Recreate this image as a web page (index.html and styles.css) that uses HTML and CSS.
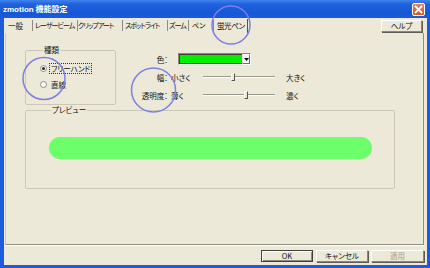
FILE: index.html
```html
<!DOCTYPE html>
<html lang="ja">
<head>
<meta charset="utf-8">
<title>zmotion 機能設定</title>
<link rel="stylesheet" href="styles.css">
</head>
<body>
<div class="window">
  <div class="titlebar">
    <span class="title"><span class="latin">zmotion</span> 機能設定</span>
    <span class="close"><svg width="11" height="11" viewBox="0 0 11 11"><path d="M2.5 2.5 L8.5 8.5 M8.5 2.5 L2.5 8.5" stroke="#fff" stroke-width="1.8" stroke-linecap="square"/></svg></span>
  </div>
  <div class="client">
    <div class="tabbar">
      <span class="tab t1">一般</span>
      <span class="tab t2">レーザービーム</span>
      <span class="tab t3">クリップアート</span>
      <span class="tab t4">スポットライト</span>
      <span class="tab t5">ズーム</span>
      <span class="tab t6">ペン</span>
      <span class="tab t7 sel">蛍光ペン</span>
      <span class="btn help">ヘルプ</span>
    </div>
    <div class="panel">
      <div class="top">
        <fieldset class="group kind">
          <legend>種類</legend>
          <div class="radio on"><span class="dot"></span><span class="rtext focus">フリーハンド</span></div>
          <div class="radio"><span class="dot"></span><span class="rtext">直線</span></div>
        </fieldset>
        <div class="settings">
          <span class="lbl">色：</span>
          <div class="color"><span class="swatch"></span><span class="arrow"><svg width="5" height="3" viewBox="0 0 5 3"><path d="M0 0 H5 L2.5 3 Z" fill="#000"/></svg></span></div>
          <span class="lbl">幅：</span>
          <span class="lo">小さく</span>
          <div class="slider"><span class="track"></span><span class="thumb" style="left:28px"></span></div>
          <span class="hi">大きく</span>
          <span class="lbl">透明度：</span>
          <span class="lo">薄く</span>
          <div class="slider"><span class="track"></span><span class="thumb" style="left:41px"></span></div>
          <span class="hi">濃く</span>
        </div>
      </div>
      <fieldset class="group preview">
        <legend>プレビュー</legend>
        <div class="bar"></div>
      </fieldset>
    </div>
    <div class="buttons">
      <span class="btn default">OK</span>
      <span class="btn">キャンセル</span>
      <span class="btn disabled">適用</span>
    </div>
  </div>
  <svg class="marks" width="430" height="268" viewBox="0 0 430 268">
    <circle cx="231" cy="25" r="19" />
    <circle cx="44" cy="78.5" r="21" />
    <circle cx="153.5" cy="90" r="22" />
  </svg>
</div>
</body>
</html>
```

FILE: styles.css
```css
* { box-sizing: border-box; }
html, body { margin: 0; padding: 0; }
body {
  width: 430px;
  height: 268px;
  overflow: hidden;
  font-family: "Noto Sans CJK JP", "Noto Sans", sans-serif;
  font-size: 7.5px;
  font-feature-settings: "palt";
  color: #111;
  background: #1E5BDA;
}
.window {
  position: relative;
  width: 430px;
  height: 268px;
  display: flex;
  flex-direction: column;
  background: #1E5BDA;
}
.titlebar {
  height: 18px;
  flex: none;
  display: flex;
  align-items: center;
  justify-content: space-between;
  padding: 0 5px 0 3px;
  background: linear-gradient(#3F82EC, #1F60DD 25%, #1757D6 75%, #1C5BD8);
}
.title {
  color: #fff;
  font-weight: bold;
  font-size: 8px;
  line-height: 10px;
}
.title .latin { font-family: "Liberation Sans", sans-serif; }
.close {
  width: 13px;
  height: 13px;
  display: flex;
  align-items: center;
  justify-content: center;
  border: 1px solid #fff;
  border-radius: 2px;
  background: linear-gradient(#E9825C, #D5511F);
}
.client {
  flex: 1;
  margin: 0 3px 3px 4px;
  background: #ECE9D8;
  display: flex;
  flex-direction: column;
}
.tabbar {
  height: 15px;
  flex: none;
  display: flex;
  align-items: center;
  padding-left: 1px;
}
.tab {
  flex: none;
  height: 11px;
  line-height: 11px;
  padding-left: 2px;
  border-right: 1px solid #8E8D82;
  white-space: nowrap;
  font-size: 7px;
  letter-spacing: -1px;
}
.t1 { width: 28px; padding-left: 3px; letter-spacing: 0; font-size: 7.5px; }
.t2 { width: 45px; }
.t3 { width: 45px; padding-left: 0; }
.t4 { width: 45px; }
.t5 { width: 21px; padding-left: 1px; }
.t6 { width: 25px; padding-left: 3px; letter-spacing: 0; }
.t7 { width: 34px; padding-left: 3px; letter-spacing: -0.4px; font-size: 7.5px; }
.sel { height: 14px; line-height: 14px; border-right-color: #55544C; }
.btn {
  flex: none;
  height: 12px;
  display: flex;
  align-items: center;
  justify-content: center;
  border: 1px solid;
  border-color: #FFFFFF #8A887C #8A887C #FFFFFF;
  box-shadow: 1px 1px 0 #5E5C54;
  background: #ECE9D8;
  line-height: 10px;
}
.help { width: 41px; margin-left: auto; margin-right: 5px; }
.panel {
  height: 212px;
  flex: none;
  margin: 0 3px 0 1px;
  border-left: 1px solid #CFCBBB;
  border-right: 1px solid #8F8D81;
  border-bottom: 1px solid #8F8D81;
  box-shadow: 0 1px 0 #fff;
  padding: 12px 0 0 19px;
}
.top { display: flex; align-items: flex-start; }
fieldset.group {
  margin: 0;
  min-width: 0;
  border: 1px solid #CCC8B8;
  border-radius: 2px;
}
.group legend {
  padding: 0 1px;
  margin-left: 3px;
  line-height: 10px;
  height: 10px;
}
.preview legend { margin-left: 2px; }
.kind {
  width: 91px;
  height: 60px;
  padding: 5px 0 0 14px;
  flex: none;
}
.radio {
  height: 16px;
  display: flex;
  align-items: center;
}
.dot {
  width: 7px;
  height: 7px;
  border-radius: 50%;
  border: 1px solid #8C8C86;
  background: #fff;
  display: flex;
  align-items: center;
  justify-content: center;
}
.radio.on .dot::after {
  content: "";
  width: 3px;
  height: 3px;
  border-radius: 50%;
  background: #222;
}
.rtext {
  margin-left: 2px;
  padding: 0 1px;
  line-height: 9px;
  border: 1px dotted transparent;
}
.rtext.focus { border-color: #333; }
.settings {
  display: grid;
  grid-template-columns: 39px 32px 72px auto;
  grid-auto-rows: 18px;
  align-items: center;
  margin: 5px 0 0 16px;
}
.lbl { text-align: right; padding-right: 3px; white-space: nowrap; }
.color {
  grid-column: 2 / span 3;
  margin-left: 7px;
  width: 73px;
  height: 12px;
  display: flex;
  border: 1px solid;
  border-color: #8A887C #FFFFFF #FFFFFF #8A887C;
  background: #fff;
}
.swatch { flex: 1; background: #00F000; border: 1px solid #404040; border-right: 0; }
.arrow {
  width: 8px;
  display: flex;
  align-items: center;
  justify-content: center;
  background: #F4F3EE;
  border: 1px solid;
  border-color: #FFFFFF #707070 #707070 #E0E0E0;
}
.slider {
  position: relative;
  height: 10px;
  display: flex;
  align-items: center;
}
.track {
  width: 100%;
  height: 2px;
  border-top: 1px solid #9A988C;
  border-bottom: 1px solid #FFFFFF;
}
.thumb {
  position: absolute;
  top: 1px;
  width: 4px;
  height: 8px;
  background: #ECE9D8;
  border: 1px solid;
  border-color: #FFFFFF #555 #555 #FFFFFF;
}
.hi { padding-left: 11px; }
.preview {
  margin: 5px 0 0 2px;
  width: 370px;
  height: 84px;
  padding: 22px 22px 0 23px;
}
.bar {
  height: 22px;
  border-radius: 11px;
  background: #6CFF69;
}
.buttons {
  height: 20px;
  flex: none;
  display: flex;
  justify-content: flex-end;
  align-items: flex-start;
  gap: 3px;
  padding: 5px 3px 0 0;
}
.buttons .btn { width: 52px; }
.buttons .btn.disabled { width: 53px; color: #A3A196; }
.btn.default { border-color: #404040; box-shadow: inset 1px 1px 0 #fff, inset -1px -1px 0 #8A887C; }
.marks {
  position: absolute;
  left: 0;
  top: 0;
  pointer-events: none;
}
.marks circle {
  fill: none;
  stroke: #7F7FE6;
  stroke-width: 1.5;
}
```
